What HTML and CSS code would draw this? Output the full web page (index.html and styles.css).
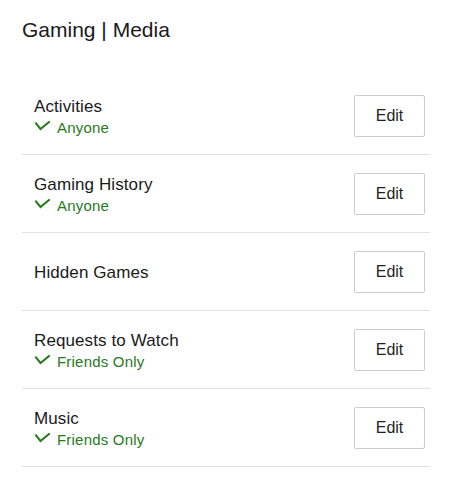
FILE: index.html
```html
<!DOCTYPE html>
<html>
<head>
<meta charset="utf-8">
<link rel="stylesheet" href="styles.css">
</head>
<body>
<div class="page">
  <h1 class="title">Gaming | Media</h1>
  <ul class="list">
    <li class="row">
      <div class="info">
        <div class="name">Activities</div>
        <div class="status"><svg class="check" width="16" height="10" viewBox="0 0 16 10"><polyline points="2,2.5 6.5,8 15,1" /></svg><span>Anyone</span></div>
      </div>
      <button class="edit">Edit</button>
    </li>
    <li class="row">
      <div class="info">
        <div class="name">Gaming History</div>
        <div class="status"><svg class="check" width="16" height="10" viewBox="0 0 16 10"><polyline points="2,2.5 6.5,8 15,1" /></svg><span>Anyone</span></div>
      </div>
      <button class="edit">Edit</button>
    </li>
    <li class="row">
      <div class="info">
        <div class="name">Hidden Games</div>
      </div>
      <button class="edit">Edit</button>
    </li>
    <li class="row">
      <div class="info">
        <div class="name">Requests to Watch</div>
        <div class="status"><svg class="check" width="16" height="10" viewBox="0 0 16 10"><polyline points="2,2.5 6.5,8 15,1" /></svg><span>Friends Only</span></div>
      </div>
      <button class="edit">Edit</button>
    </li>
    <li class="row">
      <div class="info">
        <div class="name">Music</div>
        <div class="status"><svg class="check" width="16" height="10" viewBox="0 0 16 10"><polyline points="2,2.5 6.5,8 15,1" /></svg><span>Friends Only</span></div>
      </div>
      <button class="edit">Edit</button>
    </li>
  </ul>
</div>
</body>
</html>
```
FILE: styles.css
```css
html, body {
  margin: 0;
  padding: 0;
  background: #ffffff;
}
body {
  font-family: "Liberation Sans", Arial, sans-serif;
  color: #1a1a1a;
}
.page {
  width: 408px;
  padding: 18px 0 0 22px;
}
.title {
  margin: 0;
  font-size: 21px;
  line-height: 24px;
  font-weight: normal;
  color: #1a1a1a;
}
.list {
  list-style: none;
  margin: 35px 0 0 0;
  padding: 0;
}
.row {
  height: 77px;
  border-bottom: 1px solid #e2e2e2;
  display: flex;
  align-items: center;
  justify-content: space-between;
  padding: 0 5px 0 12px;
}
.info {
  padding-top: 3px;
}
.name {
  font-size: 17px;
  line-height: 20px;
  color: #1a1a1a;
  letter-spacing: 0.1px;
}
.status {
  margin-top: 1px;
  display: flex;
  align-items: center;
  gap: 7px;
  font-size: 15px;
  line-height: 20px;
  color: #267a1c;
  letter-spacing: 0.2px;
}
.check {
  margin-bottom: 4px;
  fill: none;
  stroke: #267a1c;
  stroke-width: 2;
  stroke-linecap: square;
}
.edit {
  width: 71px;
  height: 42px;
  box-sizing: border-box;
  border: 1px solid #cccccc;
  border-radius: 2px;
  background: #ffffff;
  font-family: "Liberation Sans", Arial, sans-serif;
  font-size: 16px;
  color: #1f1f1f;
  padding: 0;
}
```
